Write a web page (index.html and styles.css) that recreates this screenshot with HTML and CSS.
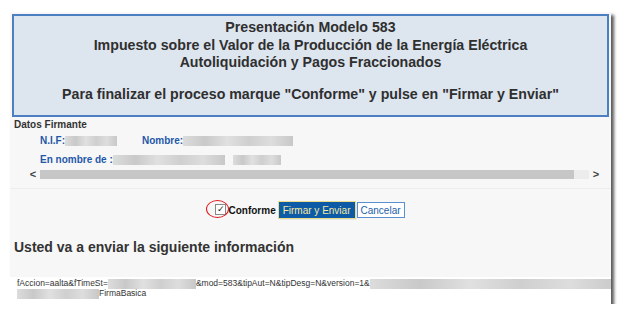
FILE: index.html
```html
<!DOCTYPE html>
<html lang="es">
<head>
    <meta charset="UTF-8">
    <title>Presentación Modelo 583</title>
    <link rel="stylesheet" href="styles.css">
</head>
<body>
    <div class="frame">
        <div class="header">
            <p>Presentación Modelo 583</p>
            <p>Impuesto sobre el Valor de la Producción de la Energía Eléctrica</p>
            <p>Autoliquidación y Pagos Fraccionados</p>
            <p class="gap">Para finalizar el proceso marque "Conforme" y pulse en "Firmar y Enviar"</p>
        </div>

        <div class="firmante">
            <div class="firmante-title">Datos Firmante</div>
            <div class="row">
                <span class="label">N.I.F:</span><span class="blur w52"></span>
                <span class="label sp">Nombre:</span><span class="blur w110"></span>
            </div>
            <div class="row">
                <span class="label">En nombre de :</span><span class="blur w112"></span><span class="blur w48 ml"></span>
            </div>
            <div class="hscroll">
                <span class="arrow">&lt;</span>
                <span class="track"><span class="thumb"></span></span>
                <span class="arrow">&gt;</span>
            </div>
        </div>

        <div class="actions">
            <span class="check-wrap">
                <span class="check">&#10003;</span>
                <span class="ring"></span>
            </span>
            <span class="conforme">Conforme</span>
            <button class="btn btn-primary">Firmar y Enviar</button>
            <button class="btn btn-cancel">Cancelar</button>
        </div>

        <h2 class="info-title">Usted va a enviar la siguiente información</h2>

        <div class="datos">
            <div class="line">fAccion=aalta&amp;fTimeSt=<span class="blur w88 dark"></span>&amp;mod=583&amp;tipAut=N&amp;tipDesg=N&amp;version=1&amp;<span class="blur w250 dark"></span></div>
            <div class="line"><span class="blur w82 dark"></span>FirmaBasica</div>
        </div>
    </div>
</body>
</html>
```

FILE: styles.css
```css
/* page frame */
body {
    margin: 0;
    background: #fff;
    font-family: "Liberation Sans", Arial, sans-serif;
    color: #333;
}

.frame {
    margin: 12px 0 0 10px;
    width: 601px;
    height: 292px;
    background: #f7f7f7;
    box-shadow: 3px 3px 3px rgba(0, 0, 0, 0.65);
    overflow: hidden;
    padding-top: 2px;
    box-sizing: border-box;
}

.header {
    margin: 0 2px;
    height: 103px;
    border: 2px solid #4b7fc1;
    background: #dde5ef;
    text-align: center;
    box-sizing: border-box;
    padding-top: 3px;
}

.header p {
    margin: 0;
    font-size: 14.2px;
    font-weight: bold;
    line-height: 17.5px;
    color: #2f2f2f;
}

.header p.gap {
    margin-top: 14px;
}

/* datos firmante */
.firmante {
    padding: 2px 0 0 4px;
}

.firmante-title {
    font-size: 10px;
    font-weight: bold;
    line-height: 12px;
    color: #333;
}

.row {
    display: flex;
    align-items: center;
    height: 19px;
    padding-left: 26px;
}

.label {
    font-size: 10px;
    font-weight: bold;
    color: #1f57a8;
}

.label.sp {
    margin-left: 25px;
}

.blur {
    display: inline-block;
    height: 10px;
    background: linear-gradient(90deg, #dcdcdc, #c9c9c9 20%, #e0e0e0 40%, #cfcfcf 60%, #dddddd 80%, #c8c8c8);
    filter: blur(0.6px);
}

.blur.dark {
    height: 10px;
    vertical-align: middle;
}

.w48 { width: 48px; }
.w52 { width: 52px; }
.w82 { width: 82px; }
.w88 { width: 88px; }
.w110 { width: 110px; }
.w112 { width: 112px; }
.w250 { width: 250px; }
.ml { margin-left: 8px; }

.hscroll {
    display: flex;
    align-items: center;
    height: 11px;
    margin: 0 8px 0 12px;
}

.arrow {
    width: 14px;
    font-size: 11px;
    line-height: 11px;
    text-align: center;
    color: #444;
    font-weight: bold;
}

.track {
    flex: 1;
    height: 9px;
    background: #ececec;
}

.thumb {
    display: block;
    width: 534px;
    height: 9px;
    background: #c6c6c6;
}

/* botones */
.actions {
    margin-top: 8px;
    border-top: 1px solid #ededed;
    display: flex;
    align-items: center;
    justify-content: center;
    height: 42px;
}

.check-wrap {
    position: relative;
    width: 12px;
    height: 12px;
    margin-right: 1px;
}

.check {
    display: block;
    width: 9px;
    height: 9px;
    border: 1px solid #888;
    background: #fff;
    font-size: 9px;
    line-height: 9px;
    text-align: center;
    color: #222;
}

.ring {
    position: absolute;
    left: -9px;
    top: -4px;
    width: 21px;
    height: 16px;
    border: 1.5px solid #e0141b;
    border-radius: 50%;
}

.conforme {
    font-size: 10px;
    font-weight: bold;
    color: #111;
    margin-right: 2px;
}

.btn {
    font-family: "Liberation Sans", Arial, sans-serif;
    font-size: 10px;
    height: 16px;
    padding: 0 3px;
    border-radius: 0;
    margin: 0 1px;
}

.btn-primary {
    background: #0d5aa7;
    color: #f4e9a0;
    border: 1px solid #0d5aa7;
    outline: 1px solid #e9dc8a;
    box-shadow: 1px 1px 1px rgba(0, 0, 0, 0.4);
}

.btn-cancel {
    background: #fff;
    color: #1a5eaa;
    border: 1px solid #5b8fd0;
}

/* informacion */
.info-title {
    margin: 8px 0 0 4px;
    font-size: 14px;
    line-height: 16px;
    font-weight: bold;
    color: #333;
}

.datos {
    margin-top: 22px;
    background: #fff;
    height: 30px;
    padding: 1px 0 0 7px;
}

.line {
    font-size: 8.5px;
    color: #333;
    white-space: nowrap;
    height: 10px;
    line-height: 10px;
}
```
